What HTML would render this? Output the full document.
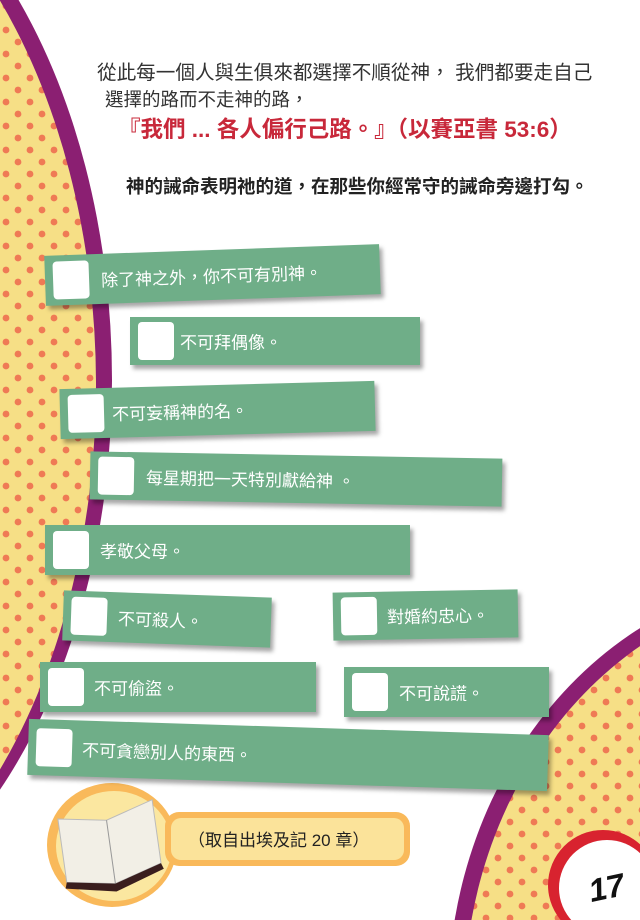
<!DOCTYPE html>
<html><head><meta charset="utf-8"><style>
html,body{margin:0;width:640px;height:920px;overflow:hidden}
body{background:#fff;position:relative;font-family:"Liberation Sans","Noto Sans CJK TC",sans-serif}
.t{position:absolute;white-space:nowrap}
.g{position:absolute;background:#6fae88;box-shadow:3px 4px 4px rgba(0,0,0,.35);color:#fff;font-size:17px}
.g .c{position:absolute;background:#fff;border-radius:4px;width:36px;height:38px;left:8px;top:50%;margin-top:-19px}
.g span{position:absolute;top:50%;transform:translateY(-50%);white-space:nowrap}
</style></head><body>
<svg width="640" height="920" style="position:absolute;left:0;top:0">
<defs><pattern id="d" width="24" height="24" patternUnits="userSpaceOnUse">
<rect width="24" height="24" fill="#f6df86"/><circle cx="6" cy="6" r="3.4" fill="#ef7a55"/><circle cx="18" cy="18" r="3.4" fill="#ef7a55"/></pattern></defs>
<ellipse cx="-240" cy="380" rx="352" ry="560" fill="#8b1f72"/>
<ellipse cx="-256" cy="385" rx="352" ry="560" fill="url(#d)"/>
<ellipse cx="820" cy="1000" rx="372" ry="425" fill="#8b1f72"/>
<ellipse cx="828" cy="1004" rx="364" ry="418" fill="url(#d)"/>
<circle cx="603" cy="885" r="55" fill="#d8232f"/>
<circle cx="607" cy="888" r="48" fill="#fff"/>
<text x="588" y="900" font-size="32" font-weight="bold" font-style="italic" font-family="Liberation Sans" fill="#111" transform="rotate(-12 600 885)">17</text>
<ellipse cx="112" cy="845" rx="65" ry="62" fill="#f9b95a"/>
<ellipse cx="114" cy="846" rx="58" ry="55" fill="#fbe7a0"/>
<rect x="165" y="812" width="245" height="54" rx="14" fill="#f9b95a"/>
<rect x="171" y="818" width="233" height="42" rx="10" fill="#fbe39a"/>
<g transform="rotate(-8 110 845)">
<path d="M62 812 L110 820 L158 806 L158 870 L110 884 L62 876Z" fill="#f2efe6" stroke="#bbb"/>
<path d="M110 820 L110 884" stroke="#999"/>
<path d="M62 876 L110 884 L158 870 L160 876 L110 892 L60 882Z" fill="#3a1e1e"/>
</g>
</svg>
<div class="t" style="left:97px;top:56px;font-size:19.6px;color:#333">從此每一個人與生俱來都選擇不順從神， 我們都要走自己</div>
<div class="t" style="left:105px;top:86px;font-size:18.5px;color:#333">選擇的路而不走神的路，</div>
<div class="t" style="left:118px;top:112px;font-size:22.5px;color:#c8283a;font-weight:bold">『我們 ... 各人偏行己路。』（以賽亞書 53:6）</div>
<div class="t" style="left:126px;top:173px;font-size:18.5px;color:#222;font-weight:bold">神的誡命表明祂的道，在那些你經常守的誡命旁邊打勾。</div>

<div class="g" style="left:45px;top:250px;width:335px;height:50px;transform:rotate(-2deg)"><div class="c"></div><span style="left:56px">除了神之外，你不可有別神。</span></div>
<div class="g" style="left:130px;top:317px;width:290px;height:48px"><div class="c"></div><span style="left:50px">不可拜偶像。</span></div>
<div class="g" style="left:60px;top:385px;width:315px;height:50px;transform:rotate(-1.5deg)"><div class="c"></div><span style="left:52px">不可妄稱神的名。</span></div>
<div class="g" style="left:90px;top:455px;width:412px;height:48px;transform:rotate(1deg)"><div class="c"></div><span style="left:56px">每星期把一天特別獻給神 。</span></div>
<div class="g" style="left:45px;top:525px;width:365px;height:50px"><div class="c"></div><span style="left:55px">孝敬父母。</span></div>
<div class="g" style="left:63px;top:594px;width:208px;height:50px;transform:rotate(2deg)"><div class="c"></div><span style="left:55px">不可殺人。</span></div>
<div class="g" style="left:333px;top:591px;width:185px;height:48px;transform:rotate(-1deg)"><div class="c"></div><span style="left:54px">對婚約忠心。</span></div>
<div class="g" style="left:40px;top:662px;width:276px;height:50px"><div class="c"></div><span style="left:54px">不可偷盜。</span></div>
<div class="g" style="left:344px;top:667px;width:205px;height:50px"><div class="c"></div><span style="left:55px">不可說謊。</span></div>
<div class="g" style="left:28px;top:727px;width:520px;height:56px;transform:rotate(1.8deg)"><div class="c"></div><span style="left:54px">不可貪戀別人的東西。</span></div>
<div class="t" style="left:188px;top:826px;font-size:17px;color:#222">（取自出埃及記 20 章）</div>
</body></html>
